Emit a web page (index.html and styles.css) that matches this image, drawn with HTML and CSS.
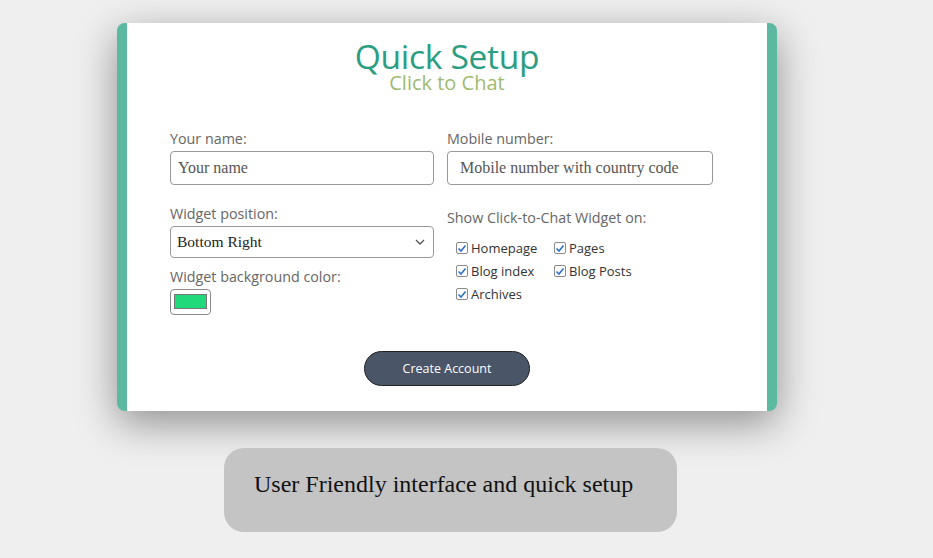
FILE: index.html
```html
<!DOCTYPE html>
<html>
<head>
<meta charset="utf-8">
<link rel="stylesheet" href="styles.css">
</head>
<body>
<div class="page">
  <div class="card">
    <div class="head">
      <h1 class="title">Quick Setup</h1>
      <div class="subtitle">Click to Chat</div>
    </div>
    <form class="form">
      <div class="field">
        <label class="label">Your name:</label>
        <input class="input" type="text" placeholder="Your name">
      </div>
      <div class="field">
        <label class="label">Mobile number:</label>
        <input class="input input-mobile" type="text" placeholder="Mobile number with country code">
      </div>
      <div class="field col-left">
        <label class="label label-pos">Widget position:</label>
        <div class="select">
          <span>Bottom Right</span>
          <svg class="chev" width="10" height="6" viewBox="0 0 10 6"><path d="M1 1 L5 5 L9 1" fill="none" stroke="#555" stroke-width="1.3"/></svg>
        </div>
        <label class="label label-color">Widget background color:</label>
        <div class="color"><div class="swatch"></div></div>
      </div>
      <div class="field col-right">
        <label class="label label-show">Show Click-to-Chat Widget on:</label>
        <div class="checks">
          <label class="check"><span class="box"><svg width="10" height="9" viewBox="0 0 10 9"><path d="M1.5 4.5 L4 7 L8.5 1.5" fill="none" stroke="#2b73c8" stroke-width="1.6"/></svg></span>Homepage</label>
          <label class="check"><span class="box"><svg width="10" height="9" viewBox="0 0 10 9"><path d="M1.5 4.5 L4 7 L8.5 1.5" fill="none" stroke="#2b73c8" stroke-width="1.6"/></svg></span>Pages</label>
          <label class="check"><span class="box"><svg width="10" height="9" viewBox="0 0 10 9"><path d="M1.5 4.5 L4 7 L8.5 1.5" fill="none" stroke="#2b73c8" stroke-width="1.6"/></svg></span>Blog index</label>
          <label class="check"><span class="box"><svg width="10" height="9" viewBox="0 0 10 9"><path d="M1.5 4.5 L4 7 L8.5 1.5" fill="none" stroke="#2b73c8" stroke-width="1.6"/></svg></span>Blog Posts</label>
          <label class="check"><span class="box"><svg width="10" height="9" viewBox="0 0 10 9"><path d="M1.5 4.5 L4 7 L8.5 1.5" fill="none" stroke="#2b73c8" stroke-width="1.6"/></svg></span>Archives</label>
        </div>
      </div>
    </form>
    <div class="actions">
      <button class="btn" type="button">Create Account</button>
    </div>
  </div>
  <div class="note">User Friendly interface and quick setup</div>
</div>
</body>
</html>
```
FILE: styles.css
```css
html, body {
  margin: 0;
  padding: 0;
  background: #efefef;
}
body {
  font-family: "Open Sans", "Noto Sans", sans-serif;
}
.page {
  width: 933px;
  height: 558px;
  padding-top: 23px;
  box-sizing: border-box;
  overflow: hidden;
}
.card {
  margin-left: 117px;
  width: 660px;
  height: 388px;
  box-sizing: border-box;
  background: #fff;
  border-left: 10px solid #5bb8a1;
  border-right: 10px solid #5bb8a1;
  border-radius: 8px;
  box-shadow: 0 12px 40px rgba(0,0,0,0.4);
}
.head {
  text-align: center;
  padding-top: 14px;
}
.title {
  margin: 0;
  font-weight: 400;
  font-size: 33.5px;
  line-height: 38px;
  color: #2a9d82;
  letter-spacing: -0.3px;
}
.subtitle {
  font-size: 20px;
  line-height: 20px;
  margin-top: -2px;
  color: #9fba70;
}
.form {
  display: grid;
  grid-template-columns: 264px 266px;
  column-gap: 13px;
  padding-left: 43px;
  margin-top: 36px;
}
.field {
  display: flex;
  flex-direction: column;
  align-items: flex-start;
}
.label {
  font-size: 14.3px;
  line-height: 20px;
  color: #666;
  margin-bottom: 2px;
}
.input {
  width: 100%;
  height: 34px;
  box-sizing: border-box;
  border: 1px solid #999;
  border-radius: 4px;
  padding: 0 7px;
  font-family: "Liberation Serif", serif;
  font-size: 16px;
  color: #333;
  outline: none;
}
.input::placeholder {
  color: #555;
}
.input-mobile {
  padding-left: 12px;
}
.col-left {
  margin-top: 19px;
}
.label-pos {
  margin-bottom: 2px;
}
.select {
  width: 100%;
  height: 32px;
  box-sizing: border-box;
  border: 1px solid #999;
  border-radius: 4px;
  display: flex;
  align-items: center;
  justify-content: space-between;
  padding: 0 8px 0 6px;
  font-family: "Liberation Serif", serif;
  font-size: 15.5px;
  color: #222;
}
.chev {
  display: block;
}
.label-color {
  margin-top: 9px;
  margin-bottom: 2px;
}
.color {
  width: 41px;
  height: 26px;
  box-sizing: border-box;
  border: 1px solid #8a8a8a;
  border-radius: 4px;
  padding: 4px 3px 5px 3px;
  background: #fff;
}
.swatch {
  width: 100%;
  height: 100%;
  background: #1fd97a;
  border: 1px solid #777;
  box-sizing: border-box;
}
.col-right {
  margin-top: 23px;
}
.label-show {
  margin-bottom: 10px;
}
.checks {
  display: grid;
  grid-template-columns: 98px auto;
  row-gap: 3px;
  padding-left: 9px;
}
.check {
  display: flex;
  align-items: center;
  font-size: 13px;
  line-height: 20px;
  color: #333;
}
.box {
  width: 12px;
  height: 12px;
  box-sizing: border-box;
  border: 1px solid #8a8a8a;
  border-radius: 2px;
  margin-right: 3px;
  display: flex;
  align-items: center;
  justify-content: center;
  background: #fff;
}
.box svg {
  display: block;
}
.actions {
  display: flex;
  justify-content: center;
  margin-top: 36px;
}
.btn {
  width: 166px;
  height: 35px;
  border: 1px solid #222;
  border-radius: 18px;
  background: #4a5568;
  color: #fff;
  font-family: "Open Sans", "Noto Sans", sans-serif;
  font-size: 12.5px;
  padding: 0;
}
.note {
  margin: 37px 0 0 224px;
  width: 453px;
  height: 84px;
  box-sizing: border-box;
  background: #c4c4c4;
  border-radius: 20px;
  padding: 22px 0 0 30px;
  font-family: "Liberation Serif", serif;
  font-size: 24px;
  line-height: 28px;
  color: #111;
}
```
